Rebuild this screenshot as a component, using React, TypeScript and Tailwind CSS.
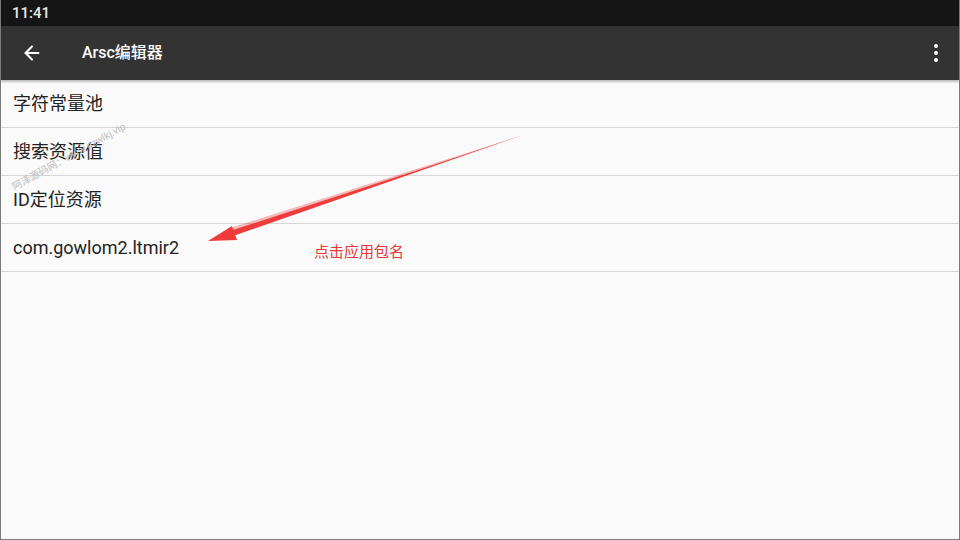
import { ArrowLeft } from 'lucide-react';

const rows = ['字符常量池', '搜索资源值', 'ID定位资源', 'com.gowlom2.ltmir2'];

const cjk = { fontFamily: 'Roboto, "Noto Sans CJK SC", sans-serif' };

export default function App() {
  return (
    <div className="w-[960px] h-[540px] flex flex-col bg-[#fafafa] border-x border-b border-[#7a7a7a] relative overflow-hidden" style={cjk}>
      {/* status bar */}
      <div className="h-[26px] bg-[#151515] flex items-center px-[11px]">
        <span className="text-[15px] text-[#e8e8e8] font-medium">11:41</span>
      </div>

      {/* toolbar */}
      <div className="h-[54px] bg-[#333333] flex items-center shadow-[0_2px_2px_rgba(0,0,0,0.25)] z-10">
        <div className="w-[64px] flex justify-center">
          <ArrowLeft className="w-[22px] h-[22px] text-white -ml-[2px]" strokeWidth={2.2} />
        </div>
        <h1 className="ml-[17px] text-[16px] font-medium text-white flex-1">Arsc编辑器</h1>
        <div className="w-[56px] flex flex-col items-center gap-[3px] pl-[9px]">
          <span className="w-[4px] h-[4px] rounded-full bg-white" />
          <span className="w-[4px] h-[4px] rounded-full bg-white" />
          <span className="w-[4px] h-[4px] rounded-full bg-white" />
        </div>
      </div>

      {/* list */}
      <ul className="flex flex-col">
        {rows.map(r => (
          <li key={r} className="h-[48px] flex items-center px-[12px] border-b border-[#d6d6d6] text-[18px] text-[#222]">
            {r}
          </li>
        ))}
      </ul>

      {/* watermark */}
      <span className="absolute left-[12px] top-[182px] origin-left -rotate-[29deg] text-[10px] leading-[12px] text-[#bdbdbd] whitespace-nowrap">
        阿泽源码网：www.azwlkj.vip
      </span>

      {/* annotation arrow */}
      <svg className="absolute left-0 top-0" width="960" height="540" viewBox="0 0 960 540">
        <polygon points="522,135 226,229 228,233" fill="#ee3b3b" opacity="0.35" />
        <polygon points="522,135 420,169 226,232 229,237" fill="#ee3b3b" />
        <polygon points="207,241 231,226 236,240" fill="#ee3b3b" />
      </svg>
      <span className="absolute left-[313px] top-[241px] text-[15px] text-[#e53935]">点击应用包名</span>
    </div>
  );
}
